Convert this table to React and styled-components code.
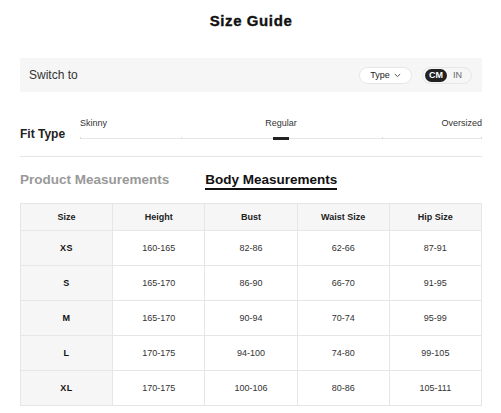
import React from 'react';
import styled, { createGlobalStyle } from 'styled-components';

const GlobalStyle = createGlobalStyle`
  body {
    margin: 0;
    background: #fff;
    font-family: "Liberation Sans", Arial, sans-serif;
    color: #222;
  }
`;

const Page = styled.div`
  width: 501px;
  padding: 0 19px 0 20px;
  box-sizing: border-box;
`;

const Title = styled.h1`
  margin: 11px 0 0;
  font-size: 15px;
  line-height: 20px;
  font-weight: 700;
  text-align: center;
  letter-spacing: 0.6px;
  -webkit-text-stroke: 0.35px #111;
  color: #111;
`;

const SwitchBar = styled.div`
  margin-top: 27px;
  height: 34px;
  background: #f6f6f6;
  display: flex;
  align-items: center;
  justify-content: space-between;
  padding: 0 10px 0 9px;
`;

const SwitchLabel = styled.span`
  font-size: 12px;
  color: #333;
`;

const Controls = styled.div`
  display: flex;
  align-items: center;
  gap: 10px;
`;

const Pill = styled.div`
  height: 17px;
  box-sizing: border-box;
  border: 1px solid #e6e6e6;
  border-radius: 9px;
  background: ${p => (p.$white ? '#fff' : '#f6f6f6')};
  display: flex;
  align-items: center;
`;

const TypePill = styled(Pill)`
  width: 53px;
  justify-content: center;
  gap: 4px;
  font-size: 9px;
  color: #222;
`;

const UnitPill = styled(Pill)`
  width: 50px;
  padding: 0 2px;
  gap: 6px;
`;

const Unit = styled.span`
  height: 13px;
  padding: 0 ${p => (p.$active ? '3px' : '0')};
  min-width: ${p => (p.$active ? '16px' : 'auto')};
  border-radius: 7px;
  background: ${p => (p.$active ? '#222' : 'transparent')};
  color: ${p => (p.$active ? '#fff' : '#666')};
  font-size: 9px;
  font-weight: ${p => (p.$active ? 700 : 400)};
  line-height: 13px;
  text-align: center;
`;

const FitRow = styled.div`
  margin-top: 26px;
  display: flex;
  align-items: flex-end;
`;

const FitLabel = styled.span`
  width: 60px;
  font-size: 12px;
  font-weight: 700;
  line-height: 14px;
  color: #222;
`;

const Slider = styled.div`
  flex: 1;
`;

const SliderLabels = styled.div`
  display: grid;
  grid-template-columns: 1fr auto 1fr;
  font-size: 9px;
  line-height: 11px;
  color: #333;
`;

const SliderLabel = styled.span`
  text-align: ${p => p.$align || 'left'};
`;

const Track = styled.div`
  position: relative;
  margin-top: 8px;
  height: 4px;
`;

const TrackLine = styled.div`
  position: absolute;
  left: 0;
  right: 0;
  top: 1px;
  height: 1px;
  background: #e6e6e6;
`;

const Tick = styled.div`
  position: absolute;
  top: 0;
  width: 1px;
  height: 2px;
  background: #ddd;
`;

const Knob = styled.div`
  position: absolute;
  top: 0;
  left: 50%;
  width: 16px;
  height: 3px;
  margin-left: -8px;
  background: #222;
`;

const Divider = styled.div`
  margin-top: 15px;
  height: 1px;
  background: #e6e6e6;
`;

const Tabs = styled.div`
  margin-top: 15px;
  display: flex;
  gap: 36px;
`;

const Tab = styled.div`
  font-size: 13.5px;
  font-weight: 700;
  line-height: 16px;
  color: ${p => (p.$active ? '#111' : '#999')};
  border-bottom: 2px solid ${p => (p.$active ? '#111' : 'transparent')};
`;

const Table = styled.table`
  margin-top: 13px;
  width: 462px;
  border-collapse: collapse;
  table-layout: fixed;
  text-align: center;
`;

const Th = styled.th`
  height: 26px;
  padding: 0;
  border: 1px solid #e6e6e6;
  background: #f6f6f6;
  font-size: 9px;
  font-weight: 700;
  color: #222;
`;

const Td = styled.td`
  height: 34px;
  padding: 0;
  border: 1px solid #e6e6e6;
  background: ${p => (p.$size ? '#f6f6f6' : '#fff')};
  font-size: 9px;
  font-weight: ${p => (p.$size ? 700 : 400)};
  color: ${p => (p.$size ? '#111' : '#333')};
  letter-spacing: ${p => (p.$size ? '0.5px' : '0')};
`;

const headers = ['Size', 'Height', 'Bust', 'Waist Size', 'Hip Size'];

const rows = [
  ['XS', '160-165', '82-86', '62-66', '87-91'],
  ['S', '165-170', '86-90', '66-70', '91-95'],
  ['M', '165-170', '90-94', '70-74', '95-99'],
  ['L', '170-175', '94-100', '74-80', '99-105'],
  ['XL', '170-175', '100-106', '80-86', '105-111'],
];

const Chevron = () => (
  <svg width="7" height="5" viewBox="0 0 7 5">
    <polyline points="0.8,1 3.5,3.6 6.2,1" fill="none" stroke="#444" strokeWidth="0.9" />
  </svg>
);

export default function App() {
  return (
    <Page>
      <GlobalStyle />
      <Title>Size Guide</Title>

      <SwitchBar>
        <SwitchLabel>Switch to</SwitchLabel>
        <Controls>
          <TypePill $white>
            Type <Chevron />
          </TypePill>
          <UnitPill>
            <Unit $active>CM</Unit>
            <Unit>IN</Unit>
          </UnitPill>
        </Controls>
      </SwitchBar>

      <FitRow>
        <FitLabel>Fit Type</FitLabel>
        <Slider>
          <SliderLabels>
            <SliderLabel>Skinny</SliderLabel>
            <SliderLabel $align="center">Regular</SliderLabel>
            <SliderLabel $align="right">Oversized</SliderLabel>
          </SliderLabels>
          <Track>
            <TrackLine />
            {[0, 25, 75, 100].map(p => (
              <Tick key={p} style={{ left: `calc(${p}% - ${p === 100 ? 1 : 0}px)` }} />
            ))}
            <Knob />
          </Track>
        </Slider>
      </FitRow>

      <Divider />

      <Tabs>
        <Tab>Product Measurements</Tab>
        <Tab $active>Body Measurements</Tab>
      </Tabs>

      <Table>
        <thead>
          <tr>
            {headers.map(h => (
              <Th key={h}>{h}</Th>
            ))}
          </tr>
        </thead>
        <tbody>
          {rows.map(r => (
            <tr key={r[0]}>
              {r.map((c, i) => (
                <Td key={i} $size={i === 0}>
                  {c}
                </Td>
              ))}
            </tr>
          ))}
        </tbody>
      </Table>
    </Page>
  );
}
